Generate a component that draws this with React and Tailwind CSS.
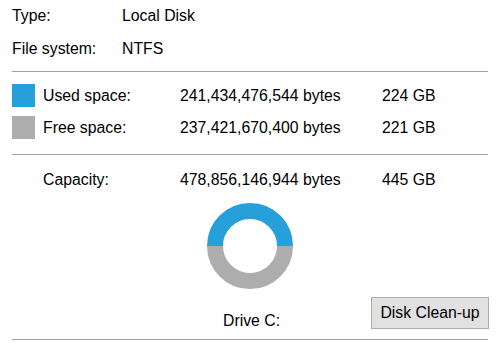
function InfoRow({ label, value, className }) {
  return (
    <div className={`flex ${className}`}>
      <span className="w-[110px]">{label}</span>
      <span>{value}</span>
    </div>
  );
}

function SpaceRow({ color, label, bytes, size }) {
  return (
    <div className="flex items-center h-[23px]">
      <div className={`w-[23px] h-[23px] ${color}`} />
      <span className="ml-[8px] w-[137px]">{label}</span>
      <span className="w-[202px]">{bytes}</span>
      <span>{size}</span>
    </div>
  );
}

function Donut() {
  return (
    <svg width="88" height="88" viewBox="0 0 88 88">
      <path d="M 9 44 A 35 35 0 0 1 79 44" fill="none" stroke="#26a0da" strokeWidth="16" />
      <path d="M 79 44 A 35 35 0 0 1 9 44" fill="none" stroke="#adadad" strokeWidth="16" />
    </svg>
  );
}

export default function App() {
  return (
    <div
      className="w-[500px] h-[354px] bg-white text-black text-[15.8px] leading-[20px] px-[12px] pt-[6px] overflow-hidden"
      style={{ fontFamily: '"Liberation Sans", Arial, sans-serif' }}
    >
      <div className="w-[476px]">
        <InfoRow label="Type:" value="Local Disk" className="h-[33px]" />
        <InfoRow label="File system:" value="NTFS" className="h-[32px]" />
        <div className="h-px bg-[#a0a0a0]" />

        <div className="mt-[12px] flex flex-col gap-[9px]">
          <SpaceRow color="bg-[#26a0da]" label="Used space:" bytes="241,434,476,544 bytes" size="224 GB" />
          <SpaceRow color="bg-[#adadad]" label="Free space:" bytes="237,421,670,400 bytes" size="221 GB" />
        </div>
        <div className="mt-[15px] h-px bg-[#a0a0a0]" />

        <div className="mt-[15px] flex pl-[31px]">
          <span className="w-[137px]">Capacity:</span>
          <span className="w-[202px]">478,856,146,944 bytes</span>
          <span>445 GB</span>
        </div>

        <div className="mt-[12px] flex justify-center">
          <Donut />
        </div>

        <div className="mt-[7px] h-[34px] grid grid-cols-[1fr_auto_1fr]">
          <div />
          <span className="self-end pl-[3px]">Drive C:</span>
          <button className="justify-self-end self-start mr-[-1px] w-[118px] h-[32px] bg-[#e1e1e1] border border-[#adadad] leading-[20px]">
            Disk Clean-up
          </button>
        </div>
        <div className="mt-[8px] h-px bg-[#a0a0a0]" />
      </div>
    </div>
  );
}
